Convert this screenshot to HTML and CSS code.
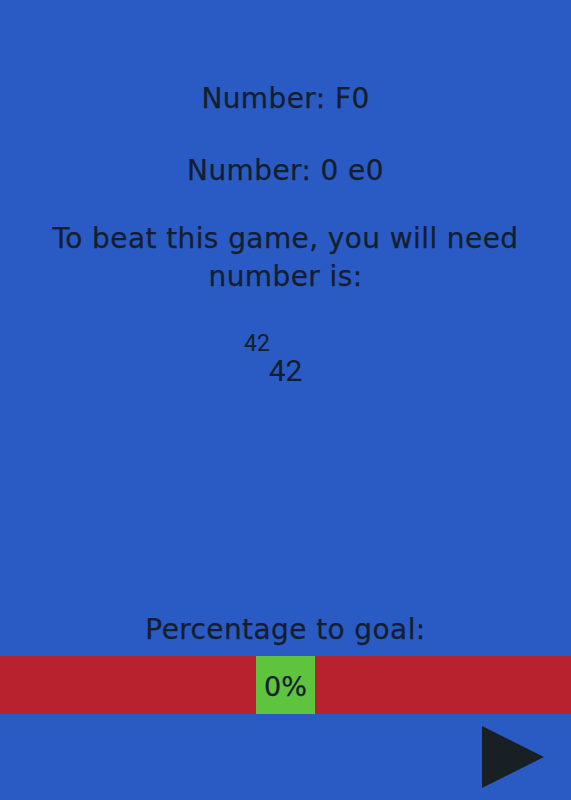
FILE: index.html
```html
<!DOCTYPE html>
<html>
<head>
<meta charset="utf-8">
<link rel="stylesheet" href="styles.css">
</head>
<body>
<div class="screen">
  <div class="top">
    <p class="line l1">Number: F0</p>
    <p class="line l2">Number: 0 e0</p>
    <p class="line l3">To beat this game, you will need<br>number is:</p>
    <div class="goal">
      <span class="small">42</span>
      <span class="big">42</span>
    </div>
  </div>
  <div class="bottom">
    <p class="line pct">Percentage to goal:</p>
    <div class="bar"><div class="fill">0%</div></div>
    <div class="actions">
      <svg class="play" width="64" height="62" viewBox="0 0 64 62"><polygon points="1,0 63,31 1,62" fill="#182024"/></svg>
    </div>
  </div>
</div>
</body>
</html>
```
FILE: styles.css
```css
html, body {
  margin: 0;
  padding: 0;
  background: #2a5bc4;
}
.screen {
  width: 571px;
  height: 800px;
  display: flex;
  flex-direction: column;
  justify-content: space-between;
  font-family: "DejaVu Sans", "Open Sans", sans-serif;
  color: #141e2e;
  -webkit-text-stroke: 0.25px #141e2e;
  overflow: hidden;
}
.top {
  display: flex;
  flex-direction: column;
  align-items: center;
  padding-top: 80px;
}
.line {
  margin: 0;
  font-size: 28px;
  letter-spacing: 0.4px;
  line-height: 38px;
  text-align: center;
}
.l2 { margin-top: 34px; }
.l3 { margin-top: 30px; }
.goal {
  display: flex;
  flex-direction: column;
  align-items: center;
  margin-top: 36px;
  font-family: "Roboto", sans-serif;
  -webkit-text-stroke: 0;
}
.small {
  font-size: 23px;
  line-height: 24px;
  margin-right: 57px;
}
.big {
  font-size: 30px;
  line-height: 30px;
}
.bottom {
  display: flex;
  flex-direction: column;
}
.pct { margin-bottom: 7px; }
.bar {
  height: 58px;
  background: #b8222e;
  display: flex;
  justify-content: center;
}
.fill {
  width: 59px;
  background: #5ec43e;
  display: flex;
  align-items: center;
  justify-content: center;
  font-size: 27px;
  padding-top: 2px;
  box-sizing: border-box;
}
.actions {
  display: flex;
  justify-content: flex-end;
  padding: 12px 26px 12px 0;
}
.play { display: block; }
```
